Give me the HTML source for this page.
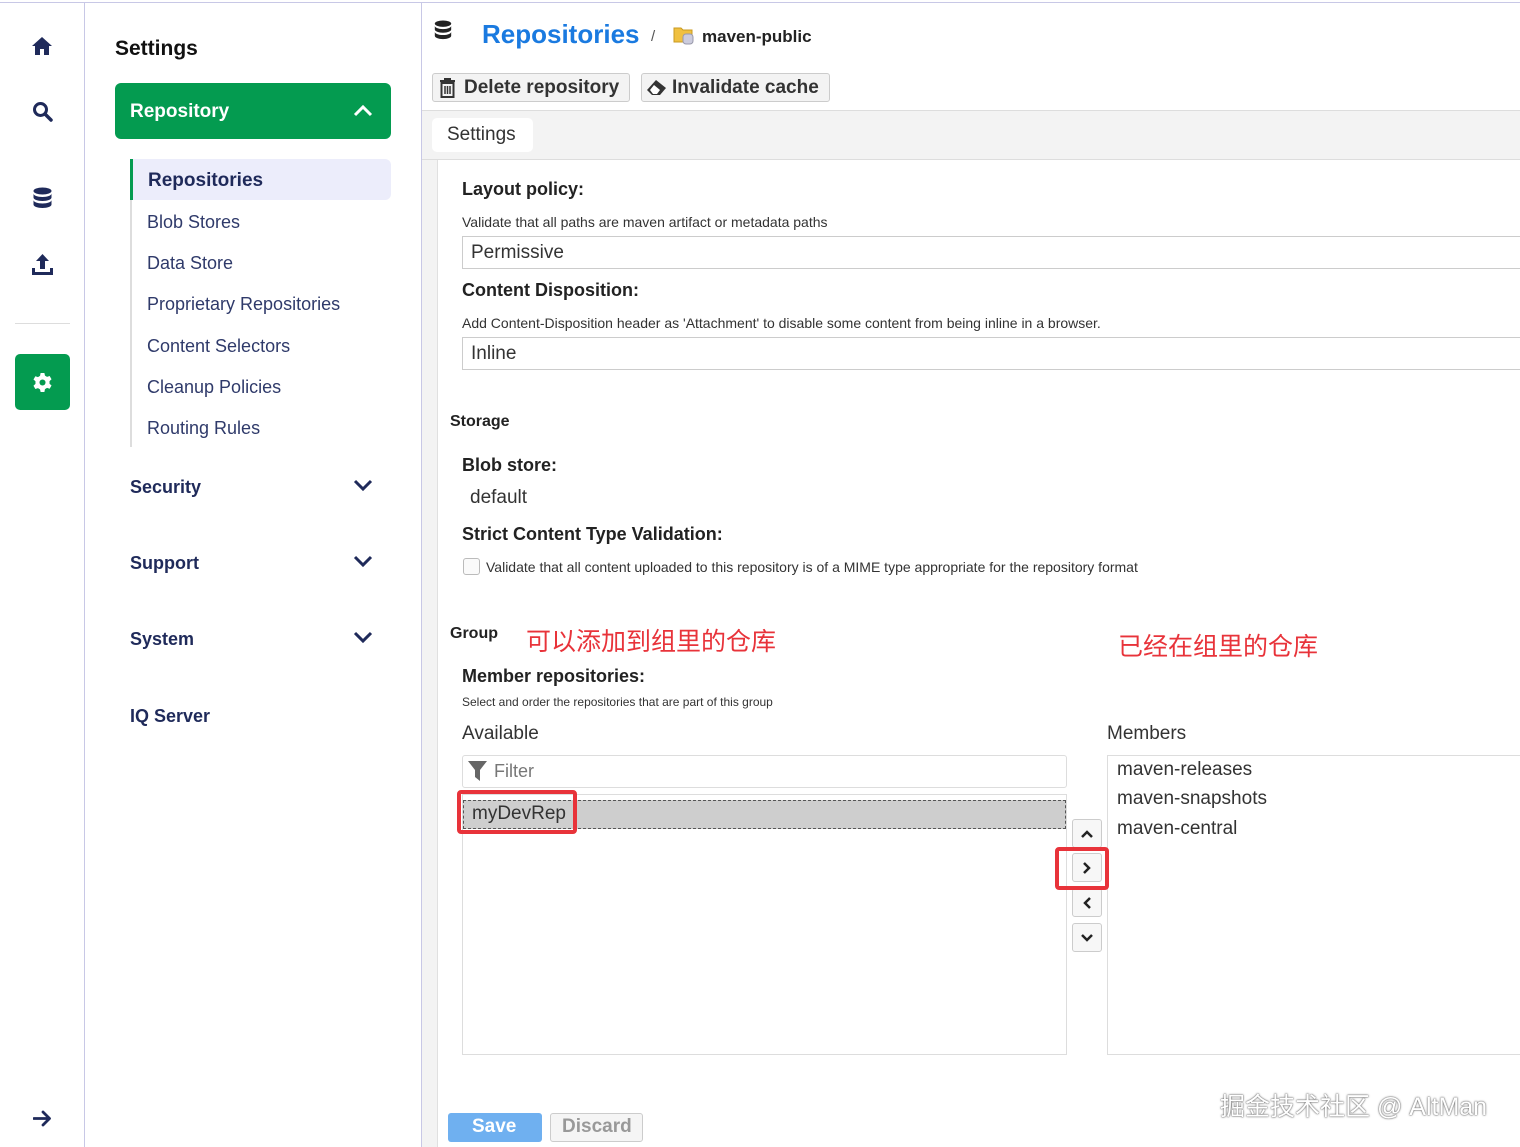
<!DOCTYPE html>
<html><head><meta charset="utf-8"><style>
*{box-sizing:border-box;margin:0;padding:0}
body{width:1520px;height:1147px;overflow:hidden;background:#fff;font-family:"Liberation Sans","Noto Sans CJK SC",sans-serif;color:#222;position:relative}
.a{position:absolute;white-space:nowrap}
.nav{color:#1f2a5a}
.sub{font-size:18px;color:#2f3a6a}
.b{font-weight:bold}
.btn{border:1px solid #ccc;border-radius:3px;background:#f3f3f3}
.ab{position:absolute;left:1072px;width:30px;height:29px;border:1px solid #ccc;border-radius:3px;background:#f7f7f7;display:flex;align-items:center;justify-content:center}
</style></head><body>
<div class="a" style="left:0;top:2px;width:1520px;height:1px;background:#c8c8e6"></div>
<div class="a" style="left:84px;top:3px;width:1px;height:1144px;background:#c8c8e6"></div>
<div class="a" style="left:421px;top:3px;width:1px;height:1144px;background:#c8c8e6"></div>
<!-- rail icons -->
<svg class="a" style="left:31px;top:36px" width="22" height="20" viewBox="0 0 22 20"><path d="M11 1L1 10h3v9h5v-6h4v6h5v-9h3z" fill="#1f2a5a"/></svg>
<svg class="a" style="left:32px;top:101px" width="21" height="21" viewBox="0 0 21 21"><circle cx="8.5" cy="8.5" r="6" fill="none" stroke="#1f2a5a" stroke-width="3"/><path d="M13 13l6 6" stroke="#1f2a5a" stroke-width="3.5" stroke-linecap="round"/></svg>
<svg class="a" style="left:33px;top:187px" width="19" height="22" viewBox="0 0 19 22"><ellipse cx="9.5" cy="4" rx="9" ry="3.5" fill="#1f2a5a"/><path d="M.5 6.5v4c0 2 4 3.5 9 3.5s9-1.5 9-3.5v-4c0 2-4 3.5-9 3.5s-9-1.5-9-3.5zM.5 13v4.5c0 2 4 3.5 9 3.5s9-1.5 9-3.5V13c0 2-4 3.5-9 3.5s-9-1.5-9-3.5z" fill="#1f2a5a"/></svg>
<svg class="a" style="left:32px;top:254px" width="21" height="21" viewBox="0 0 21 21"><path d="M10.5 0L4 7h4v8h5V7h4zM0 14h3v4h15v-4h3v7H0z" fill="#1f2a5a"/></svg>
<div class="a" style="left:15px;top:323px;width:55px;height:1px;background:#ddd"></div>
<div class="a" style="left:15px;top:354px;width:55px;height:56px;background:#049b50;border-radius:5px"></div>
<svg class="a" style="left:33px;top:373px" width="19" height="19" viewBox="0 0 20 20"><path d="M8 0h4l.6 2.8 2.2 1.3 2.7-.9 2 3.4-2.1 1.9v2.8l2.1 1.9-2 3.4-2.7-.9-2.2 1.3L12 20H8l-.6-2.8-2.2-1.3-2.7.9-2-3.4 2.1-1.9V8.7L.5 6.8l2-3.4 2.7.9 2.2-1.3z" fill="#fff"/><circle cx="10" cy="10" r="3.2" fill="#049b50"/></svg>
<svg class="a" style="left:33px;top:1110px" width="19" height="17" viewBox="0 0 19 17"><path d="M1 8.5h15M10 2l6.5 6.5L10 15" fill="none" stroke="#1f2a5a" stroke-width="2.8" stroke-linecap="round" stroke-linejoin="round"/></svg>
<!-- settings panel -->
<div class="a b" style="left:115px;top:37px;font-size:21px;color:#111">Settings</div>
<div class="a" style="left:115px;top:83px;width:276px;height:56px;background:#049b50;border-radius:6px"></div>
<div class="a b" style="left:130px;top:101px;font-size:19px;color:#fff">Repository</div>
<svg class="a" style="left:353px;top:104px" width="20" height="13" viewBox="0 0 20 13"><path d="M2 11l8-8 8 8" fill="none" stroke="#fff" stroke-width="3"/></svg>
<div class="a" style="left:130px;top:159px;width:2px;height:288px;background:#ddd"></div>
<div class="a" style="left:130px;top:159px;width:261px;height:41px;background:#ecedfb;border-radius:0 6px 6px 0;border-left:3px solid #049b50"></div>
<div class="a" style="left:148px;top:170px;font-size:19px;color:#1f2a5a;font-weight:600">Repositories</div>
<div class="a sub" style="left:147px;top:212px">Blob Stores</div>
<div class="a sub" style="left:147px;top:253px">Data Store</div>
<div class="a sub" style="left:147px;top:294px">Proprietary Repositories</div>
<div class="a sub" style="left:147px;top:336px">Content Selectors</div>
<div class="a sub" style="left:147px;top:377px">Cleanup Policies</div>
<div class="a sub" style="left:147px;top:418px">Routing Rules</div>
<div class="a nav b" style="left:130px;top:477px;font-size:18px">Security</div>
<div class="a nav b" style="left:130px;top:553px;font-size:18px">Support</div>
<div class="a nav b" style="left:130px;top:629px;font-size:18px">System</div>
<div class="a nav b" style="left:130px;top:706px;font-size:18px">IQ Server</div>
<svg class="a" style="left:353px;top:479px" width="20" height="13" viewBox="0 0 20 13"><path d="M2 2l8 8 8-8" fill="none" stroke="#1f2a5a" stroke-width="3"/></svg>
<svg class="a" style="left:353px;top:555px" width="20" height="13" viewBox="0 0 20 13"><path d="M2 2l8 8 8-8" fill="none" stroke="#1f2a5a" stroke-width="3"/></svg>
<svg class="a" style="left:353px;top:631px" width="20" height="13" viewBox="0 0 20 13"><path d="M2 2l8 8 8-8" fill="none" stroke="#1f2a5a" stroke-width="3"/></svg>
<!-- main header -->
<svg class="a" style="left:434px;top:20px" width="18" height="20" viewBox="0 0 19 22"><ellipse cx="9.5" cy="4" rx="9" ry="3.5" fill="#222"/><path d="M.5 6.5v4c0 2 4 3.5 9 3.5s9-1.5 9-3.5v-4c0 2-4 3.5-9 3.5s-9-1.5-9-3.5zM.5 13v4.5c0 2 4 3.5 9 3.5s9-1.5 9-3.5V13c0 2-4 3.5-9 3.5s-9-1.5-9-3.5z" fill="#222"/></svg>
<div class="a b" style="left:482px;top:19px;font-size:26px;color:#1a7ae0">Repositories</div>
<div class="a" style="left:651px;top:28px;font-size:15px;color:#555">/</div>
<svg class="a" style="left:673px;top:25px" width="22" height="20" viewBox="0 0 22 20"><path d="M1 3h7l2 2h9v12H1z" fill="#f0c040" stroke="#c99a20"/><rect x="10" y="9" width="10" height="10" rx="3" fill="#ccd" stroke="#99a"/></svg>
<div class="a b" style="left:702px;top:27px;font-size:17px;color:#222">maven-public</div>
<div class="a btn" style="left:432px;top:73px;width:198px;height:29px"></div>
<svg class="a" style="left:439px;top:78px" width="17" height="20" viewBox="0 0 17 20"><path d="M1 3h15M6 3V1h5v2M2.5 5h12v14h-12z" fill="none" stroke="#333" stroke-width="2"/><path d="M6 8v8M8.5 8v8M11 8v8" stroke="#333" stroke-width="1.5"/></svg>
<div class="a b" style="left:464px;top:77px;font-size:19px;color:#333">Delete repository</div>
<div class="a btn" style="left:641px;top:73px;width:189px;height:29px"></div>
<svg class="a" style="left:646px;top:79px" width="22" height="18" viewBox="0 0 22 18"><path d="M10 1l10 8-6 7H6L1 11z" fill="#333"/><path d="M4 11l4-5 6 5-3 4H7z" fill="#fff"/></svg>
<div class="a b" style="left:672px;top:77px;font-size:19px;color:#333">Invalidate cache</div>
<div class="a" style="left:422px;top:110px;width:1098px;height:50px;background:#f3f3f3;border-top:1px solid #ddd;border-bottom:1px solid #ddd"></div>
<div class="a" style="left:432px;top:118px;width:101px;height:34px;background:#fff;border-radius:5px"></div>
<div class="a" style="left:447px;top:124px;font-size:19px;color:#333">Settings</div>
<div class="a" style="left:422px;top:160px;width:16px;height:987px;background:#f3f3f3;border-right:1px solid #e0e0e0"></div>
<!-- content -->
<div class="a b" style="left:462px;top:179px;font-size:18px">Layout policy:</div>
<div class="a" style="left:462px;top:214px;font-size:14px;color:#333">Validate that all paths are maven artifact or metadata paths</div>
<div class="a" style="left:462px;top:236px;width:1070px;height:33px;border:1px solid #ccc"></div>
<div class="a" style="left:471px;top:242px;font-size:19px;color:#333">Permissive</div>
<div class="a b" style="left:462px;top:280px;font-size:18px">Content Disposition:</div>
<div class="a" style="left:462px;top:315px;font-size:14px;color:#333">Add Content-Disposition header as 'Attachment' to disable some content from being inline in a browser.</div>
<div class="a" style="left:462px;top:337px;width:1070px;height:33px;border:1px solid #ccc"></div>
<div class="a" style="left:471px;top:343px;font-size:19px;color:#333">Inline</div>
<div class="a b" style="left:450px;top:413px;font-size:16px">Storage</div>
<div class="a b" style="left:462px;top:455px;font-size:18px">Blob store:</div>
<div class="a" style="left:470px;top:487px;font-size:19px;color:#333">default</div>
<div class="a b" style="left:462px;top:524px;font-size:18px">Strict Content Type Validation:</div>
<div class="a" style="left:463px;top:558px;width:17px;height:17px;border:1px solid #bbb;border-radius:3px;background:#fafafa"></div>
<div class="a" style="left:486px;top:559px;font-size:14px;color:#333">Validate that all content uploaded to this repository is of a MIME type appropriate for the repository format</div>
<div class="a b" style="left:450px;top:625px;font-size:16px">Group</div>
<div class="a" style="left:526px;top:622px;font-size:25px;color:#e8333a">可以添加到组里的仓库</div>
<div class="a" style="left:1118px;top:627px;font-size:25px;color:#e8333a">已经在组里的仓库</div>
<div class="a b" style="left:462px;top:666px;font-size:18px">Member repositories:</div>
<div class="a" style="left:462px;top:695px;font-size:12px;color:#333">Select and order the repositories that are part of this group</div>
<div class="a" style="left:462px;top:723px;font-size:19px;color:#333">Available</div>
<div class="a" style="left:1107px;top:723px;font-size:19px;color:#333">Members</div>
<div class="a" style="left:462px;top:755px;width:605px;height:33px;border:1px solid #ddd;border-radius:3px"></div>
<svg class="a" style="left:467px;top:760px" width="21" height="22" viewBox="0 0 21 22"><path d="M1 1h19l-7 9v11l-5-4v-7z" fill="#666"/></svg>
<div class="a" style="left:494px;top:761px;font-size:18px;color:#777">Filter</div>
<div class="a" style="left:462px;top:794px;width:605px;height:261px;border:1px solid #ddd"></div>
<div class="a" style="left:463px;top:800px;width:603px;height:29px;background:#cecece;border:1px dashed #555"></div>
<div class="a" style="left:472px;top:803px;font-size:19px;color:#333">myDevRep</div>
<div class="a" style="left:457px;top:790px;width:120px;height:44px;border:4px solid #e8333a;border-radius:4px"></div>
<div class="a" style="left:1107px;top:755px;width:420px;height:300px;border:1px solid #ddd"></div>
<div class="a" style="left:1117px;top:759px;font-size:19px;color:#333">maven-releases</div>
<div class="a" style="left:1117px;top:788px;font-size:19px;color:#333">maven-snapshots</div>
<div class="a" style="left:1117px;top:818px;font-size:19px;color:#333">maven-central</div>
<div class="ab" style="top:819px"><svg width="12" height="8"><path d="M1 7l5-5 5 5" fill="none" stroke="#222" stroke-width="2.5"/></svg></div>
<div class="ab" style="top:853px"><svg width="8" height="12"><path d="M1 1l5 5-5 5" fill="none" stroke="#222" stroke-width="2.5"/></svg></div>
<div class="ab" style="top:888px"><svg width="8" height="12"><path d="M7 1L2 6l5 5" fill="none" stroke="#222" stroke-width="2.5"/></svg></div>
<div class="ab" style="top:923px"><svg width="12" height="8"><path d="M1 1l5 5 5-5" fill="none" stroke="#222" stroke-width="2.5"/></svg></div>
<div class="a" style="left:1055px;top:847px;width:54px;height:43px;border:4px solid #e8333a;border-radius:4px"></div>
<div class="a" style="left:448px;top:1113px;width:94px;height:29px;background:#6fb0f0;border-radius:3px"></div>
<div class="a b" style="left:472px;top:1116px;font-size:19px;color:#fff">Save</div>
<div class="a btn" style="left:550px;top:1113px;width:93px;height:29px;background:#f5f5f5"></div>
<div class="a b" style="left:562px;top:1116px;font-size:19px;color:#999">Discard</div>
<div class="a" style="left:1220px;top:1087px;font-size:25px;color:#fff;text-shadow:0 0 2px #666,0 0 1px #444">掘金技术社区 @ AltMan</div>
</body></html>
